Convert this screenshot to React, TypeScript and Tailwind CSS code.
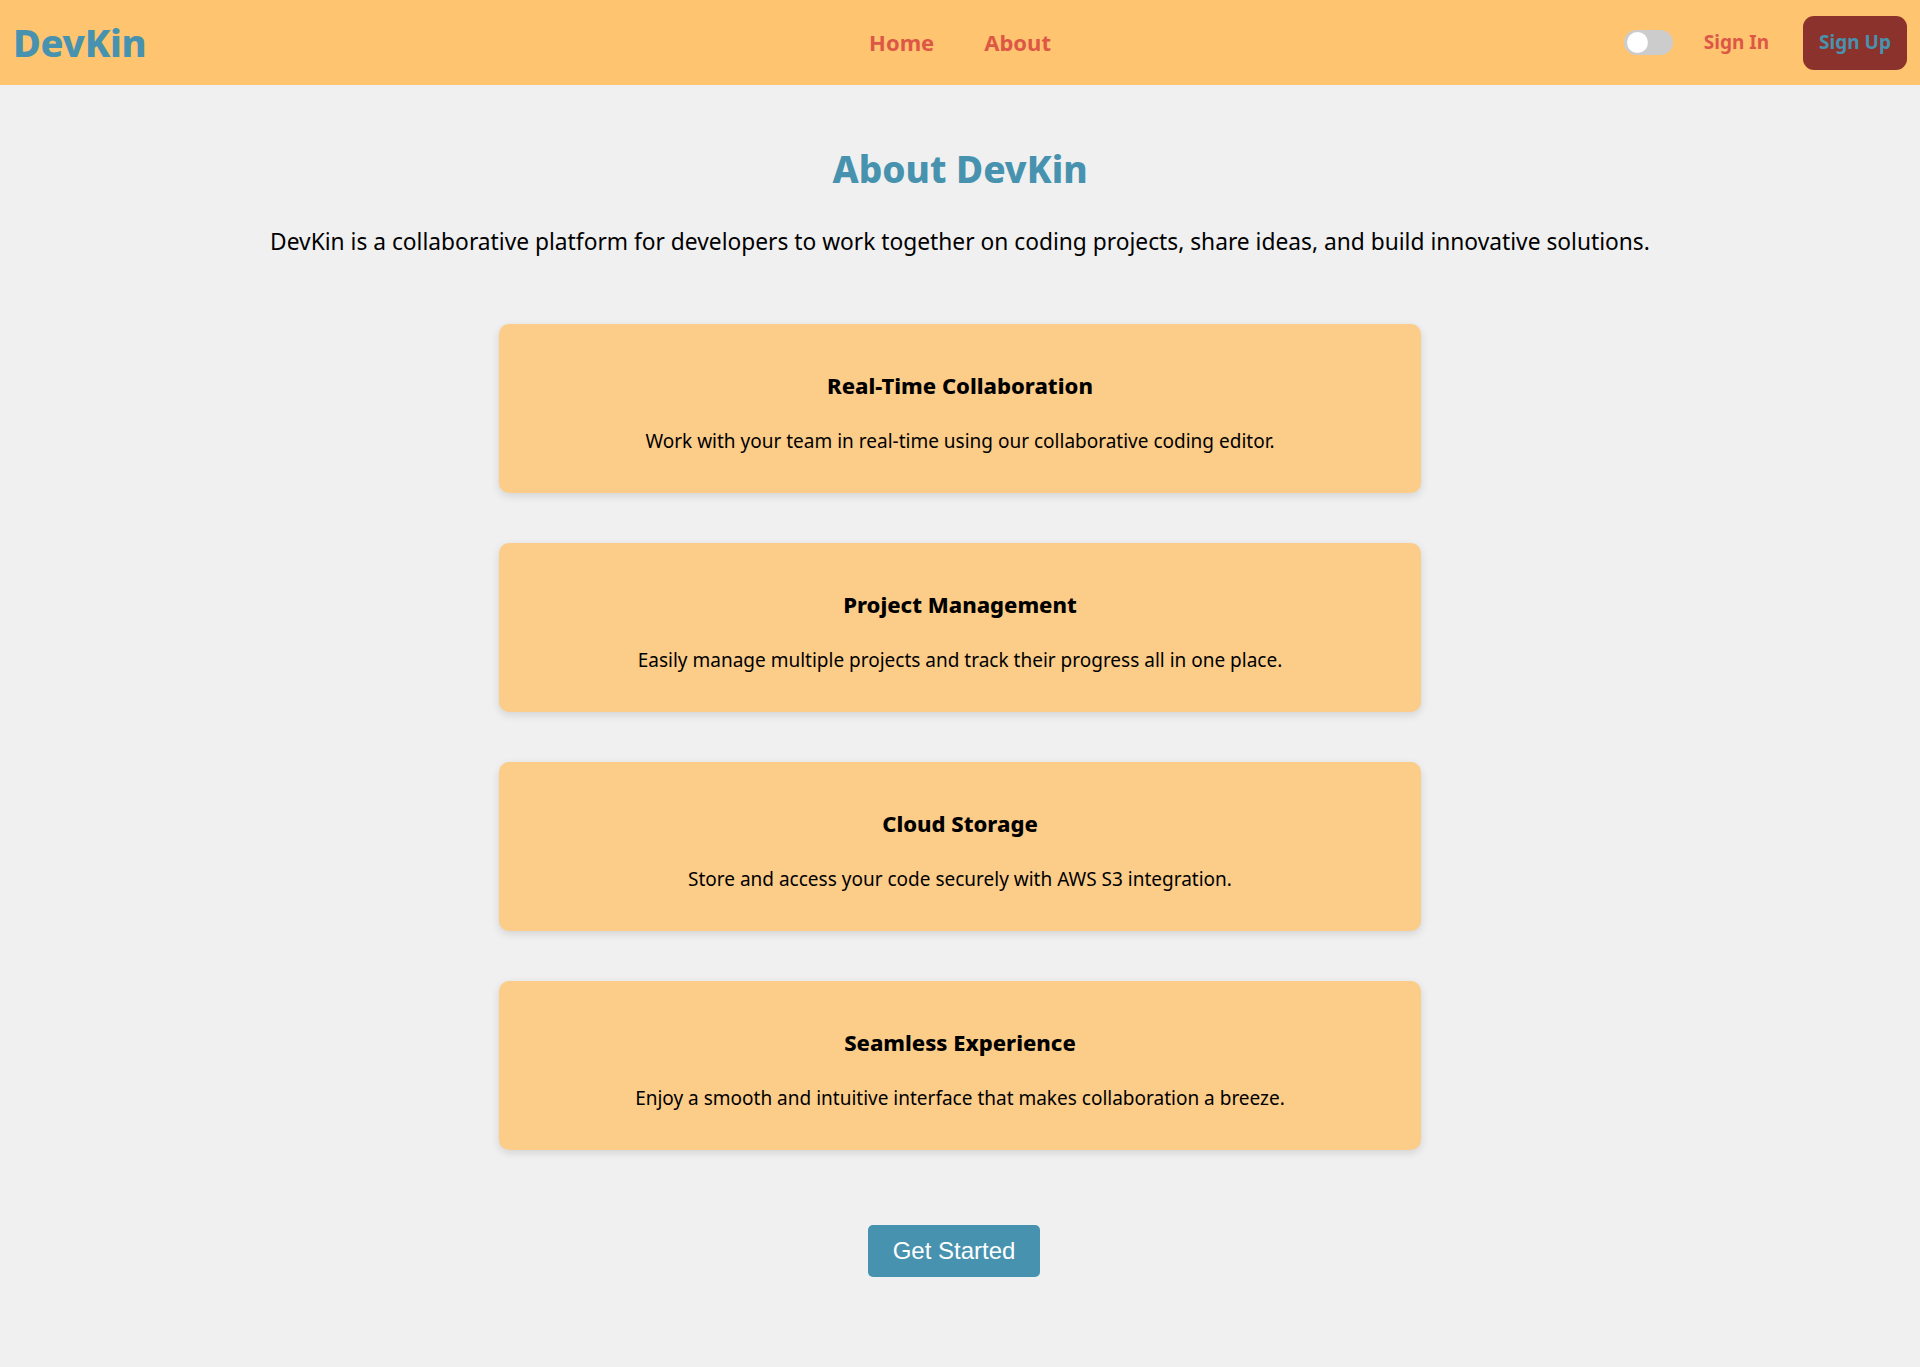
import React from "react";

const cards = [
  { t: "Real-Time Collaboration", d: "Work with your team in real-time using our collaborative coding editor." },
  { t: "Project Management", d: "Easily manage multiple projects and track their progress all in one place." },
  { t: "Cloud Storage", d: "Store and access your code securely with AWS S3 integration." },
  { t: "Seamless Experience", d: "Enjoy a smooth and intuitive interface that makes collaboration a breeze." },
];

export default function App() {
  return (
    <div className="min-h-[1367px] bg-[#f0f0f0] font-['Noto_Sans',sans-serif] text-black">
      <header className="h-[85px] bg-[#ffc470] flex items-center justify-between pl-[13px] pr-[13px] relative">
        <div className="text-[38px] font-extrabold text-[#4793af] tracking-[-0.3px]">DevKin</div>
        <nav className="absolute left-1/2 -translate-x-1/2 top-0 h-full flex items-center gap-[50px]">
          <a className="text-[22px] font-bold text-[#dd5746]">Home</a>
          <a className="text-[22px] font-bold text-[#dd5746]">About</a>
        </nav>
        <div className="flex items-center">
          <div className="w-[49px] h-[25px] rounded-full bg-[#cccccc] flex items-center px-[3px] mr-[31px]">
            <div className="w-[21px] h-[21px] rounded-full bg-white" />
          </div>
          <a className="text-[19px] font-bold text-[#dd5746] mr-[34px]">Sign In</a>
          <button className="w-[104px] h-[54px] rounded-[11px] bg-[#8b322c] text-[#4793af] text-[19px] font-bold">Sign Up</button>
        </div>
      </header>
      <main className="flex flex-col items-center">
        <h1 className="mt-[60px] text-[37px] leading-[48px] font-extrabold text-[#4793af]">About DevKin</h1>
        <p className="mt-[34px] text-[22.75px] leading-[30px]">
          DevKin is a collaborative platform for developers to work together on coding projects, share ideas, and build innovative solutions.
        </p>
        <div className="mt-[67px] w-[922px] flex flex-col gap-[50px]">
          {cards.map((c) => (
            <div key={c.t} className="h-[169px] rounded-[10px] bg-[#fccc89] shadow-[0_3px_8px_rgba(0,0,0,0.12)] flex flex-col items-center pt-[47px]">
              <h2 className="text-[22px] leading-[28px] font-extrabold">{c.t}</h2>
              <p className="mt-[29px] text-[19px] leading-[26px]">{c.d}</p>
            </div>
          ))}
        </div>
        <button className="mt-[75px] w-[172px] h-[52px] rounded-[5px] bg-[#4793af] text-white text-[24px] font-['Liberation_Sans',Arial,sans-serif] -translate-x-[6px]">
          Get Started
        </button>
      </main>
    </div>
  );
}
